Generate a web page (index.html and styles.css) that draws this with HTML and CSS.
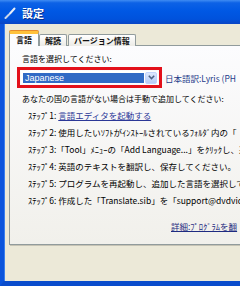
FILE: index.html
```html
<!DOCTYPE html>
<html lang="ja">
<head>
    <meta charset="UTF-8" />
    <title>設定</title>
    <link rel="stylesheet" href="styles.css">
</head>
<body>
    <div class="window">
        <div class="titlebar">
            <svg class="title-icon" width="12" height="12" viewBox="0 0 12 12">
                <path d="M10.5 1.5 L6 6.5" stroke="#e8eef8" stroke-width="2" stroke-linecap="round" />
                <path d="M5 7.5 L1.5 11" stroke="#c9d6ea" stroke-width="2" stroke-linecap="round" />
            </svg>
            <span class="title">設定</span>
        </div>
        <div class="frame">
            <div class="tabs">
                <div class="tab active">言語</div>
                <div class="tab">解読</div>
                <div class="tab">バージョン情報</div>
            </div>
            <div class="panel">
                <p class="label">言語を選択してください:</p>
                <div class="select-row">
                    <div class="marker">
                        <div class="select">
                            <span class="select-value">Japanese</span>
                            <span class="select-btn">
                                <svg width="7" height="5" viewBox="0 0 7 5">
                                    <path d="M0.8 0.8 L3.5 3.6 L6.2 0.8" fill="none" stroke="#4d6185" stroke-width="1.5" />
                                </svg>
                            </span>
                        </div>
                    </div>
                    <span class="translator">日本語訳:Lyris (PH</span>
                </div>
                <p class="label label-add">あなたの国の言語がない場合は手動で追加してください:</p>
                <ul class="steps">
                    <li>ｽﾃｯﾌﾟ1: <a class="link">言語エディタを起動する</a></li>
                    <li>ｽﾃｯﾌﾟ2: 使用したいｿﾌﾄがｲﾝｽﾄｰﾙされているﾌｫﾙﾀﾞ内の「</li>
                    <li>ｽﾃｯﾌﾟ3:「Tool」ﾒﾆｭｰの「Add Language...」をｸﾘｯｸし、追</li>
                    <li>ｽﾃｯﾌﾟ4: 英語のテキストを翻訳し、保存してください。</li>
                    <li>ｽﾃｯﾌﾟ5: プログラムを再起動し、追加した言語を選択してく</li>
                    <li>ｽﾃｯﾌﾟ6: 作成した「Translate.sib」を「support@dvdvideos</li>
                </ul>
                <a class="details">詳細:ﾌﾟﾛｸﾞﾗﾑを翻</a>
            </div>
        </div>
    </div>
</body>
</html>
```

FILE: styles.css
```css
* {
    box-sizing: border-box;
}

body {
    margin: 0;
    width: 240px;
    height: 286px;
    overflow: hidden;
    font-family: "Noto Sans CJK JP", "Noto Sans", sans-serif;
    font-size: 8px;
    color: #000;
}

.window {
    width: 240px;
    height: 286px;
    display: flex;
    flex-direction: column;
    background: #ece9d8;
}

/* Barra de título estilo XP */
.titlebar {
    height: 24px;
    flex: none;
    display: flex;
    align-items: center;
    gap: 6px;
    padding: 2px 0 0 4px;
    background: linear-gradient(#3f8cf3 0, #0d62e6 12%, #0058e4 45%, #0052dc 80%, #0a45c4 100%);
}

.title {
    color: #fff;
    font-weight: bold;
    font-size: 11px;
    line-height: 14px;
    text-shadow: 1px 1px 0 #0a2f8c;
}

.frame {
    flex: 1;
    border-left: 4px solid #0b54dc;
    border-bottom: 5px solid #0a4ccc;
    box-shadow: inset 1px 0 0 #3a7fee;
    padding: 8px 0 0 5px;
    overflow: hidden;
}

.tabs {
    display: flex;
    align-items: flex-end;
    gap: 1px;
    height: 14px;
    margin-bottom: -1px;
}

.tab {
    height: 12px;
    padding: 0 5px;
    border: 1px solid #919b9c;
    border-bottom: none;
    border-radius: 2px 2px 0 0;
    background: linear-gradient(#ffffff, #ecebe6);
    font-weight: bold;
    font-size: 8px;
    line-height: 11px;
    color: #111;
    white-space: nowrap;
}

.tab.active {
    position: relative;
    z-index: 1;
    height: 15px;
    padding: 0 6px;
    margin-right: -1px;
    border-top: 3px solid #ffc23c;
    box-shadow: 0 -1px 0 #e68b2c;
    background: #fcfcfe;
    line-height: 11px;
}

.panel {
    width: 300px;
    height: 200px;
    border: 1px solid #919b9c;
    background: linear-gradient(#fcfcfe, #f1f0eb);
    box-shadow: 1px 1px 0 #c6c3b4;
    padding: 7px 0 0 12px;
    white-space: nowrap;
}

.label {
    margin: 0;
    line-height: 12px;
}

.select-row {
    display: flex;
    align-items: center;
    margin: 2px 0 0 -5px;
}

/* Marcação vermelha do screenshot */
.marker {
    width: 145px;
    height: 21px;
    border: 3px solid #e3101a;
    padding: 1px;
}

.select {
    height: 13px;
    display: flex;
    align-items: center;
    padding: 1px 1px 1px 2px;
    background: #fff;
}

.select-value {
    flex: 1;
    height: 10px;
    background: #316ac5;
    color: #fff;
    font-family: "Liberation Sans", sans-serif;
    font-size: 9px;
    line-height: 10px;
    padding-left: 2px;
}

.select-btn {
    width: 12px;
    height: 12px;
    margin-left: 1px;
    display: flex;
    align-items: center;
    justify-content: center;
    border-radius: 2px;
    background: linear-gradient(#dce7fd, #b7cbf6);
    border: 1px solid #c3d3fd;
}

.translator {
    margin-left: 3px;
    color: #1f3b8a;
    font-size: 8.5px;
    line-height: 12px;
}

.label-add {
    margin-top: 5px;
}

.steps {
    list-style: none;
    margin: 2px 0 0;
    padding: 0 0 0 6px;
    font-size: 8.5px;
}

.steps li {
    line-height: 17px;
}

.link,
.details {
    color: #2b3797;
    text-decoration: underline;
}

.details {
    display: block;
    margin: 11px 0 0 149px;
    font-size: 8.5px;
    line-height: 12px;
    color: #1e2a80;
}
```
